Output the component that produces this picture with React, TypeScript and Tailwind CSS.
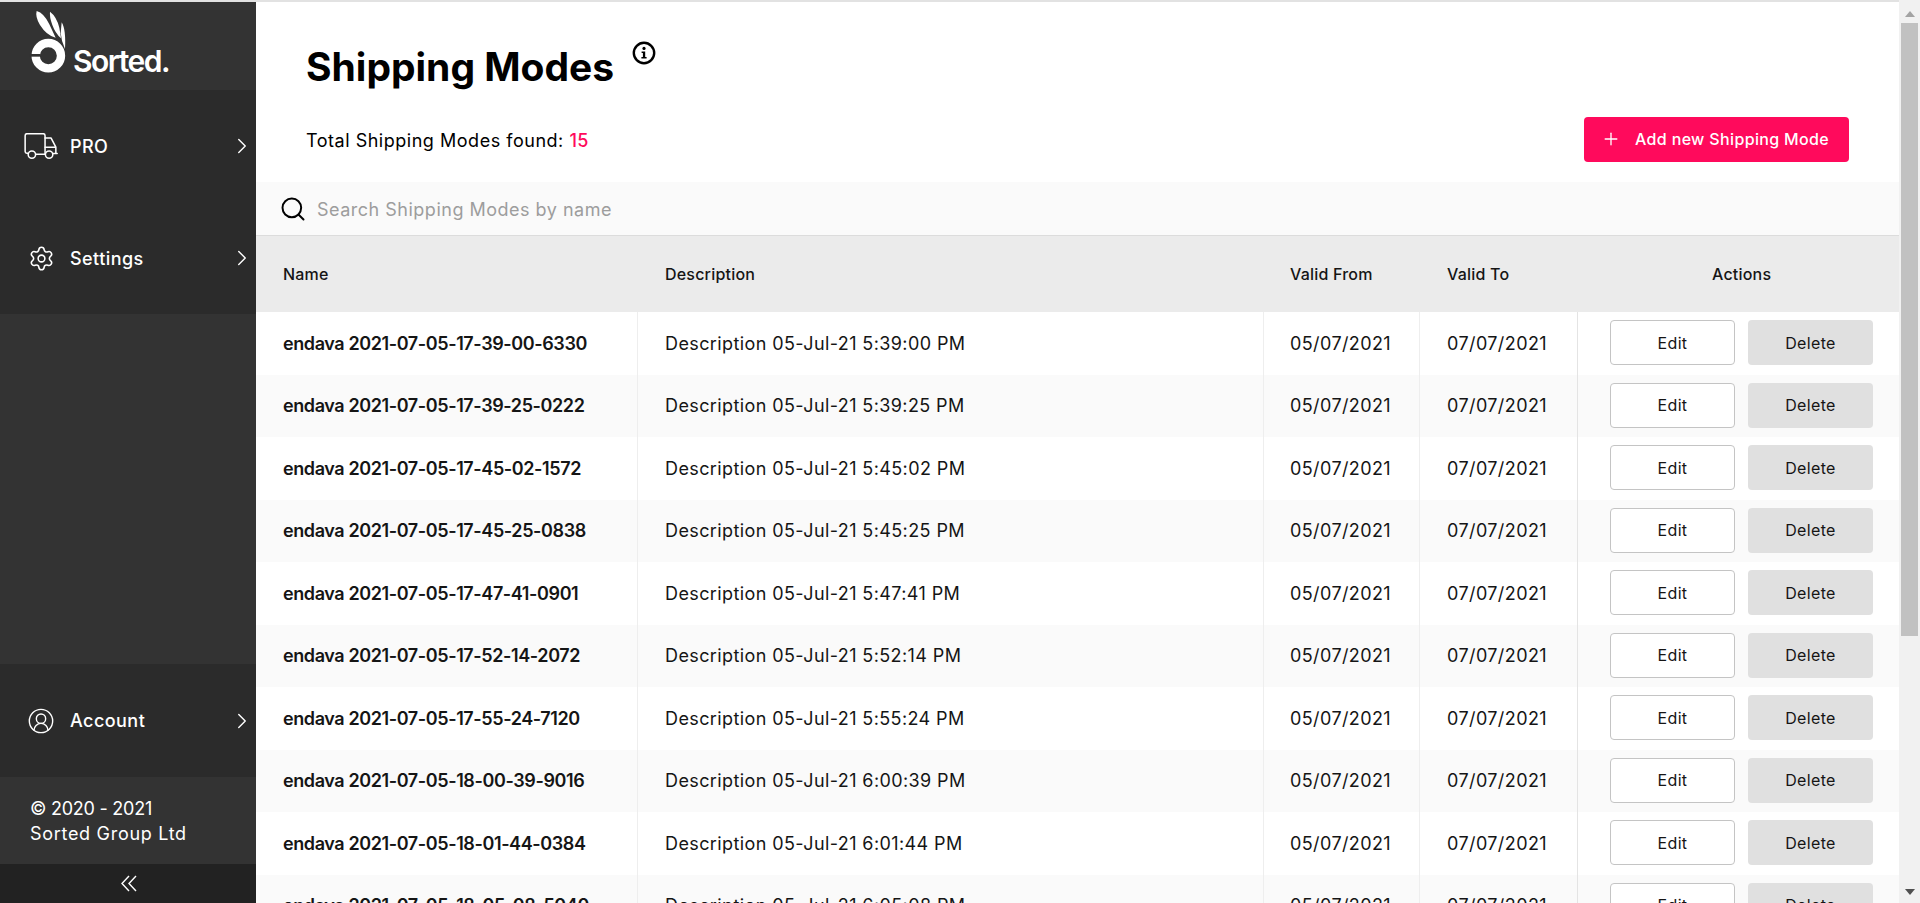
import { ChevronRight, CircleUserRound, Plus, Search, Settings } from "lucide-react";

const rows = [
  ["endava 2021-07-05-17-39-00-6330", "Description 05-Jul-21 5:39:00 PM"],
  ["endava 2021-07-05-17-39-25-0222", "Description 05-Jul-21 5:39:25 PM"],
  ["endava 2021-07-05-17-45-02-1572", "Description 05-Jul-21 5:45:02 PM"],
  ["endava 2021-07-05-17-45-25-0838", "Description 05-Jul-21 5:45:25 PM"],
  ["endava 2021-07-05-17-47-41-0901", "Description 05-Jul-21 5:47:41 PM"],
  ["endava 2021-07-05-17-52-14-2072", "Description 05-Jul-21 5:52:14 PM"],
  ["endava 2021-07-05-17-55-24-7120", "Description 05-Jul-21 5:55:24 PM"],
  ["endava 2021-07-05-18-00-39-9016", "Description 05-Jul-21 6:00:39 PM"],
  ["endava 2021-07-05-18-01-44-0384", "Description 05-Jul-21 6:01:44 PM"],
  ["endava 2021-07-05-18-05-08-5040", "Description 05-Jul-21 6:05:08 PM"],
];

function Logo() {
  return (
    <svg width="50" height="72" viewBox="24 9 150 216" className="shrink-0">
      <path d="M50 18 Q72 24 88 58 L107 98 Q80 92 60 60 Q45 35 50 18Z" fill="#fff" />
      <path d="M90 20 Q110 35 118 68 L123 100 Q106 85 97 60 Q88 35 90 20Z" fill="#fff" />
      <path d="M125 52 Q138 72 135 132 Q124 108 122 85Z" fill="#fff" />
      <circle cx="85" cy="152" r="38" fill="none" stroke="#fff" strokeWidth="25" />
      <rect x="28" y="147" width="34" height="8" fill="#333333" />
    </svg>
  );
}

function Truck() {
  return (
    <svg width="34" height="27" viewBox="30 40 100 80" fill="none" stroke="#fff" strokeWidth="4.5" strokeLinecap="round" strokeLinejoin="round">
      <path d="M41 100 H38 Q33 100 33 95 V48 Q33 42 39 42 H86 Q92 42 92 48 V103 H65" />
      <path d="M92 55 H110 L124 82 V101 M92 82 H124 M116 101 H128" />
      <circle cx="53" cy="104" r="11" />
      <circle cx="104" cy="104" r="11" />
    </svg>
  );
}

function InfoIcon() {
  return (
    <svg width="24" height="24" viewBox="0 0 24 24" className="-mt-[4px] ml-[18px] shrink-0">
      <circle cx="12" cy="12" r="10.2" fill="none" stroke="#000" strokeWidth="2.4" />
      <circle cx="12" cy="7.4" r="1.6" fill="#000" />
      <path d="M9.6 10.4 H13.2 V16 H14.6 V17.6 H9.4 V16 H10.9 V12 H9.6Z" fill="#000" />
    </svg>
  );
}

function NavItem({ icon, label, h }: { icon: React.ReactNode; label: string; h: string }) {
  return (
    <div className={`flex items-center text-white ${h}`}>
      <div className="flex w-[70px] shrink-0 justify-center pl-[12px]">{icon}</div>
      <span className="text-[18px] font-medium tracking-[0.45px]">{label}</span>
      <ChevronRight className="mr-[1px] ml-auto h-[26px] w-[26px]" strokeWidth={1.3} />
    </div>
  );
}

export default function App() {
  return (
    <div className="flex h-[903px] w-full overflow-hidden bg-white font-['Inter',sans-serif] text-[#151515]">
      <div className="flex min-w-0 flex-1 flex-col">
        <div className="h-[2px] shrink-0 bg-[#e2e2e2]" />
        <div className="flex min-h-0 flex-1">
          {/* sidebar */}
          <aside className="flex w-[256px] shrink-0 flex-col bg-[#333333]">
            <div className="flex h-[88px] shrink-0 items-start pt-[6px] pl-[28px]">
              <Logo />
              <span className="mt-[33px] -ml-[5px] text-[30px] leading-[40px] font-semibold tracking-[-1.5px] text-white">Sorted.</span>
            </div>
            <div className="shrink-0 bg-[#2b2b2b]">
              <NavItem h="h-[112px]" icon={<Truck />} label="PRO" />
              <NavItem h="h-[112px]" icon={<Settings className="h-[27px] w-[27px]" strokeWidth={1.4} />} label="Settings" />
            </div>
            <div className="flex-1" />
            <div className="shrink-0 bg-[#2b2b2b]">
              <NavItem h="h-[113px]" icon={<CircleUserRound className="h-[28px] w-[28px]" strokeWidth={1.2} />} label="Account" />
            </div>
            <div className="flex h-[87px] shrink-0 flex-col justify-center pl-[30px] text-[18px] leading-[25px] text-white">
              <span className="tracking-[-0.25px]">© 2020 - 2021</span>
              <span className="tracking-[0.7px]">Sorted Group Ltd</span>
            </div>
            <div className="flex h-[39px] shrink-0 items-center justify-center bg-[#222222] pl-[2px]">
              <svg width="16" height="17" viewBox="0 0 16 17" fill="none" stroke="#fff" strokeWidth="1.4">
                <path d="M8 1 L1 8.5 L8 16 M15 1 L8 8.5 L15 16" />
              </svg>
            </div>
          </aside>

          {/* main */}
          <main className="min-w-0 flex-1">
            <div className="flex h-[180px] flex-col pl-[50px]">
              <div className="flex h-[116px] items-start pt-[43px]">
                <h1 className="text-[39px] leading-[44px] font-bold text-black">Shipping Modes</h1>
                <InfoIcon />
              </div>
              <div className="flex items-center justify-between pr-[50px]">
                <p className="text-[18px] tracking-[0.52px] text-black">
                  Total Shipping Modes found: <span className="font-medium text-[#ff0a5c]">15</span>
                </p>
                <button className="-mt-[1px] flex h-[45px] w-[265px] items-center rounded-[4px] bg-[#ff0a5c] pb-[2px] pl-[17px] text-[16px] font-medium tracking-[0.35px] text-white">
                  <Plus className="mr-[14px] h-[20px] w-[20px]" strokeWidth={1.6} />
                  Add new Shipping Mode
                </button>
              </div>
            </div>

            <div className="flex h-[54px] items-center border-b border-[#dcdcdc] bg-[#fafafa] pl-[23px]">
              <Search className="h-[28px] w-[28px] text-black" strokeWidth={1.7} />
              <span className="mt-[2px] ml-[10px] text-[18px] tracking-[0.5px] text-[#9d9d9d]">Search Shipping Modes by name</span>
            </div>

            <div className="grid h-[76px] grid-cols-[382px_626px_156px_158px_1fr] items-center bg-[#ebebeb] text-[16px] font-medium tracking-[0.2px]">
              <div className="pl-[27px]">Name</div>
              <div className="pl-[27px]">Description</div>
              <div className="pl-[26px]">Valid From</div>
              <div className="pl-[27px]">Valid To</div>
              <div className="pl-[134px]">Actions</div>
            </div>

            {rows.map(([name, desc], i) => (
              <div
                key={name}
                className={`grid h-[62.5px] grid-cols-[382px_626px_156px_158px_1fr] text-[18px] tracking-[0.4px] ${i % 2 ? "bg-[#fafafa]" : "bg-white"}`}
              >
                <div className="flex items-center border-r border-[#eeeeee] pl-[27px] font-semibold tracking-[-0.4px]">{name}</div>
                <div className="flex items-center border-r border-[#eeeeee] pl-[27px]">{desc}</div>
                <div className="flex items-center border-r border-[#eeeeee] pl-[26px]">05/07/2021</div>
                <div className="flex items-center border-r border-[#e4e4e4] pl-[27px]">07/07/2021</div>
                <div className="flex items-center gap-[13px] pb-[1px] pl-[32px] text-[16px] tracking-[0.35px]">
                  <button className="h-[45px] w-[125px] rounded-[4px] border border-[#c4c4c4] bg-white">Edit</button>
                  <button className="h-[45px] w-[125px] rounded-[4px] bg-[#e0e0e0]">Delete</button>
                </div>
              </div>
            ))}
          </main>
        </div>
      </div>

      {/* window scrollbar */}
      <div className="flex w-[21px] shrink-0 flex-col items-center bg-[#f1f1f1]">
        <svg width="10" height="6" viewBox="0 0 10 6" className="mt-[11px]">
          <path d="M5 0 L10 6 H0Z" fill="#a3a3a3" />
        </svg>
        <div className="mt-[6px] h-[613px] w-[17px] bg-[#c1c1c1]" />
        <svg width="10" height="6" viewBox="0 0 10 6" className="mt-[253px]">
          <path d="M0 0 H10 L5 6Z" fill="#505050" />
        </svg>
      </div>
    </div>
  );
}
